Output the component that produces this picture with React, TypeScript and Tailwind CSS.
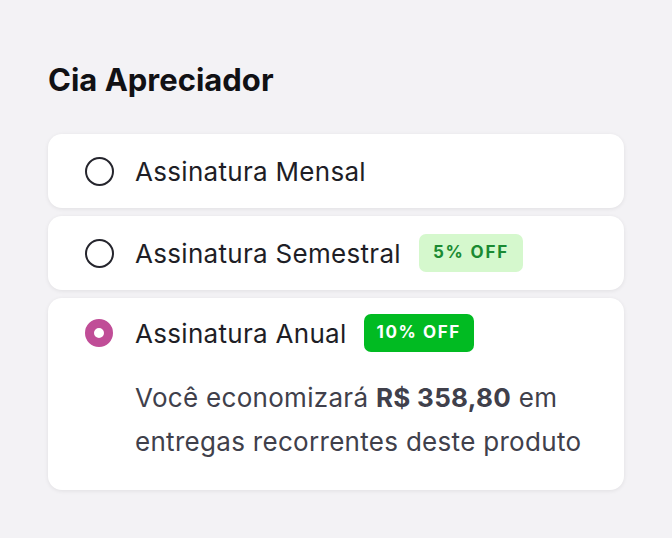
import React from "react";

function Radio({ checked }: { checked?: boolean }) {
  return checked ? (
    <span className="box-border w-[28px] h-[28px] rounded-full border-[9px] border-[#c04d97] bg-white shrink-0" />
  ) : (
    <span className="box-border w-[29px] h-[29px] rounded-full border-2 border-[#25252d] bg-white shrink-0" />
  );
}

function Row({ label, checked, badge }: { label: string; checked?: boolean; badge?: React.ReactNode }) {
  return (
    <div className="flex items-center h-[38px]">
      <div className="w-[87px] flex justify-center pl-[15px]">
        <Radio checked={checked} />
      </div>
      <span className="text-[26px] tracking-[0.3px] text-[#1e1e26]">{label}</span>
      {badge}
    </div>
  );
}

export default function App() {
  return (
    <div className="min-h-[538px] w-[672px] bg-[#f3f2f5] px-[48px] pt-[58px]" style={{ fontFamily: "Inter, 'Noto Sans', sans-serif" }}>
      <h1 className="text-[31px] font-bold tracking-[0px] text-[#111114] leading-[44px]">Cia Apreciador</h1>
      <div className="mt-[32px] flex flex-col gap-[8px]">
        <div className="bg-white rounded-[14px] shadow-[0_1px_4px_rgba(0,0,0,0.08)] py-[18px]">
          <Row label="Assinatura Mensal" />
        </div>
        <div className="bg-white rounded-[14px] shadow-[0_1px_4px_rgba(0,0,0,0.08)] py-[18px]">
          <Row
            label="Assinatura Semestral"
            badge={
              <span className="ml-[18px] h-[38px] px-[14px] rounded-[7px] bg-[#d5f8cd] text-[#1a8a32] text-[17px] font-bold tracking-[1.8px] flex items-center">
                5% OFF
              </span>
            }
          />
        </div>
        <div className="bg-white rounded-[14px] shadow-[0_1px_4px_rgba(0,0,0,0.08)] pt-[16px] pb-[26px]">
          <Row
            label="Assinatura Anual"
            checked
            badge={
              <span className="ml-[17px] h-[38px] px-[13px] rounded-[7px] bg-[#01bb22] text-white text-[17px] font-bold tracking-[1.6px] flex items-center">
                10% OFF
              </span>
            }
          />
          <p className="mt-[24px] pl-[87px] pr-[20px] text-[26px] leading-[44px] tracking-[0.3px] text-[#40404b]">
            Você economizará <span className="font-bold">R$ 358,80</span> em entregas recorrentes deste produto
          </p>
        </div>
      </div>
    </div>
  );
}
